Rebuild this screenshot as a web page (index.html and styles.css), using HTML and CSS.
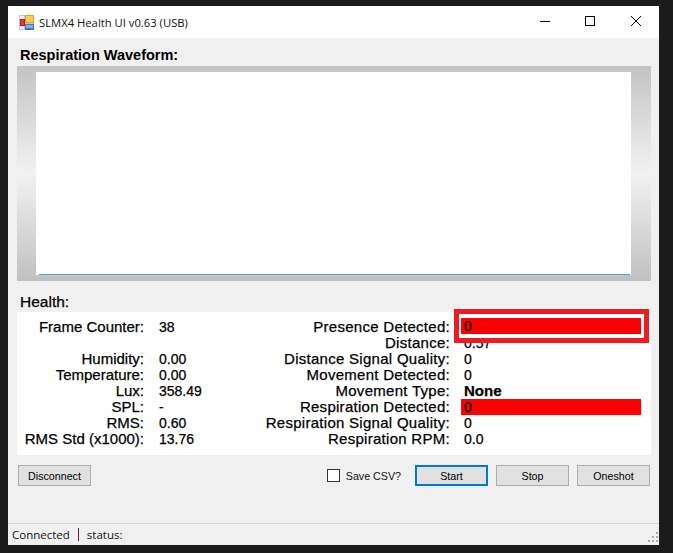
FILE: index.html
```html
<!DOCTYPE html>
<html lang="en">
<head>
    <meta charset="UTF-8">
    <title>SLMX4 Health UI v0.63 (USB)</title>
    <link rel="stylesheet" href="styles.css">
</head>
<body>
    <div class="window">
        <div class="titlebar">
            <svg class="app_icon" width="15" height="15" viewBox="0 0 15 15">
                <rect x="0" y="0" width="15" height="15" fill="#c4c4c4"/>
                <rect x="1" y="1" width="4" height="3" fill="#f4f4f4"/>
                <rect x="1" y="11" width="4" height="3" fill="#f4f4f4"/>
                <rect x="1" y="4" width="5" height="7" fill="#b82020"/>
                <rect x="2" y="5" width="3" height="5" fill="#e43a30"/>
                <rect x="6" y="0" width="9" height="8" fill="#e0a020"/>
                <rect x="7" y="1" width="7" height="6" fill="#fbd050"/>
                <rect x="6" y="9" width="9" height="6" fill="#3f74c8"/>
                <rect x="7" y="10" width="7" height="3" fill="#82aee8"/>
            </svg>
            <span class="title">SLMX4 Health UI v0.63 (USB)</span>
            <div class="win_btns">
                <svg width="46" height="32" viewBox="0 0 46 32"><path d="M19 15.5h10" stroke="#000" fill="none"/></svg>
                <svg width="46" height="32" viewBox="0 0 46 32"><rect x="18.5" y="10.5" width="9" height="9" stroke="#000" fill="none"/></svg>
                <svg width="46" height="32" viewBox="0 0 46 32"><path d="M18 10l10 10M28 10l-10 10" stroke="#000" fill="none"/></svg>
            </div>
        </div>
        <div class="content">
            <div class="heading">Respiration Waveform:</div>
            <div class="chart">
                <div class="plot"><div class="trace"></div></div>
            </div>
            <div class="sub_heading">Health:</div>
            <div class="panel">
                <div class="grid">
                    <div class="lbl">Frame Counter:</div><div class="val">38</div>
                    <div class="lbl lbl2">Presence Detected:</div><div class="val2 red first">0</div>

                    <div class="lbl"></div><div class="val"></div>
                    <div class="lbl lbl2">Distance:</div><div class="val2">0.57</div>

                    <div class="lbl">Humidity:</div><div class="val">0.00</div>
                    <div class="lbl lbl2">Distance Signal Quality:</div><div class="val2">0</div>

                    <div class="lbl">Temperature:</div><div class="val">0.00</div>
                    <div class="lbl lbl2">Movement Detected:</div><div class="val2">0</div>

                    <div class="lbl">Lux:</div><div class="val">358.49</div>
                    <div class="lbl lbl2">Movement Type:</div><div class="val2 strong">None</div>

                    <div class="lbl">SPL:</div><div class="val">-</div>
                    <div class="lbl lbl2">Respiration Detected:</div><div class="val2 red">0</div>

                    <div class="lbl">RMS:</div><div class="val">0.60</div>
                    <div class="lbl lbl2">Respiration Signal Quality:</div><div class="val2">0</div>

                    <div class="lbl">RMS Std (x1000):</div><div class="val">13.76</div>
                    <div class="lbl lbl2">Respiration RPM:</div><div class="val2">0.0</div>
                </div>
                <div class="callout"></div>
            </div>
            <div class="controls">
                <button class="btn">Disconnect</button>
                <label class="save_csv"><span class="check"></span>Save CSV?</label>
                <button class="btn btn_focus">Start</button>
                <button class="btn">Stop</button>
                <button class="btn">Oneshot</button>
            </div>
        </div>
        <div class="statusbar">
            <span>Connected</span>
            <span class="sep"></span>
            <span>status:</span>
            <svg class="grip" width="10" height="10" viewBox="0 0 10 10" fill="#a8a8a8">
                <rect x="8" y="0" width="2" height="2"/>
                <rect x="4" y="4" width="2" height="2"/>
                <rect x="8" y="4" width="2" height="2"/>
                <rect x="0" y="8" width="2" height="2"/>
                <rect x="4" y="8" width="2" height="2"/>
                <rect x="8" y="8" width="2" height="2"/>
            </svg>
        </div>
    </div>
</body>
</html>
```

FILE: styles.css
```css
* {
    padding: 0;
    margin: 0;
    box-sizing: border-box;
}
html, body {
    height: 100%;
}
body {
    background-color: #1b1b1b;
    padding: 6px 14px 8px 8px;
    overflow: hidden;
}
.window {
    display: flex;
    flex-direction: column;
    width: 651px;
    height: 539px;
    background-color: #f0f0f0;
    font-family: "Liberation Sans", Arial, sans-serif;
    color: #000;
}
.titlebar {
    display: flex;
    align-items: center;
    height: 32px;
    padding-left: 11px;
    background-color: #fff;
    flex: none;
}
.app_icon {
    margin-right: 5px;
}
.title {
    font-family: "Open Sans", sans-serif;
    font-size: 11.25px;
    color: #111;
}
.win_btns {
    display: flex;
    margin-left: auto;
}
.content {
    flex: 1;
    padding: 9px 8px 0 9px;
}
.heading {
    height: 19px;
    padding-left: 3px;
    font-size: 14.5px;
    font-weight: bold;
    line-height: 17px;
}
.chart {
    display: flex;
    width: 634px;
    height: 215px;
    padding: 6px 20px 6px 19px;
    background: linear-gradient(to bottom, #c3c3c3 0%, #f2f2f2 50%, #c0c0c0 100%);
}
.plot {
    flex: 1;
    display: flex;
    align-items: flex-end;
    padding: 0 1px 0 3px;
    background-color: #fff;
}
.trace {
    flex: 1;
    height: 1px;
    background-color: #5b9bea;
}
.sub_heading {
    height: 31px;
    padding: 12px 0 0 3px;
    font-size: 15.5px;
    line-height: 17px;
    -webkit-text-stroke: 0.25px #000;
}
.panel {
    position: relative;
    width: 634px;
    height: 143px;
    padding-top: 7px;
    background-color: #fff;
}
.grid {
    display: grid;
    grid-template-columns: 127px 116px 190px 180px;
    grid-auto-rows: 16px;
    font-size: 14px;
    line-height: 16px;
    -webkit-text-stroke: 0.25px #000;
}
.lbl {
    font-size: 15px;
    text-align: right;
    white-space: nowrap;
}
.lbl2 {
    letter-spacing: 0.28px;
}
.val {
    padding-left: 15px;
}
.val2 {
    margin-left: 11px;
    padding-left: 3px;
    width: 180px;
    grid-column: 4;
    white-space: nowrap;
}
.strong {
    font-size: 15px;
    font-weight: bold;
}
.red {
    background-color: #f00;
}
.first {
    margin-top: -1px;
    margin-bottom: 1px;
}
.callout {
    position: absolute;
    left: 437px;
    top: -3px;
    width: 195px;
    height: 34px;
    border: 5px solid #ed1c24;
}
.controls {
    display: flex;
    align-items: center;
    height: 21px;
    margin-top: 10px;
    padding: 0 1px;
    width: 634px;
    font-size: 10.7px;
}
.btn {
    width: 73px;
    height: 21px;
    margin-right: 8px;
    background-color: #e1e1e1;
    border: 1px solid #adadad;
    font-family: "Liberation Sans", Arial, sans-serif;
    font-size: 10.7px;
    color: #000;
}
.btn:last-child {
    margin-right: 0;
}
.btn_focus {
    border: 2px solid #0078d7;
}
.save_csv {
    display: flex;
    align-items: center;
    margin-left: auto;
    margin-right: 14px;
    color: #111;
}
.check {
    width: 13px;
    height: 13px;
    margin-right: 6px;
    background-color: #fff;
    border: 1px solid #333;
}
.statusbar {
    display: flex;
    align-items: center;
    gap: 8px;
    height: 22px;
    padding: 0 1px 0 4px;
    border-top: 1px solid #d7d7d7;
    font-family: "Open Sans", sans-serif;
    font-size: 11.5px;
    color: #111;
    flex: none;
}
.sep {
    width: 1px;
    height: 13px;
    background-color: #5a1a40;
}
.grip {
    margin-left: auto;
    align-self: flex-end;
    margin-bottom: 3px;
}
```
